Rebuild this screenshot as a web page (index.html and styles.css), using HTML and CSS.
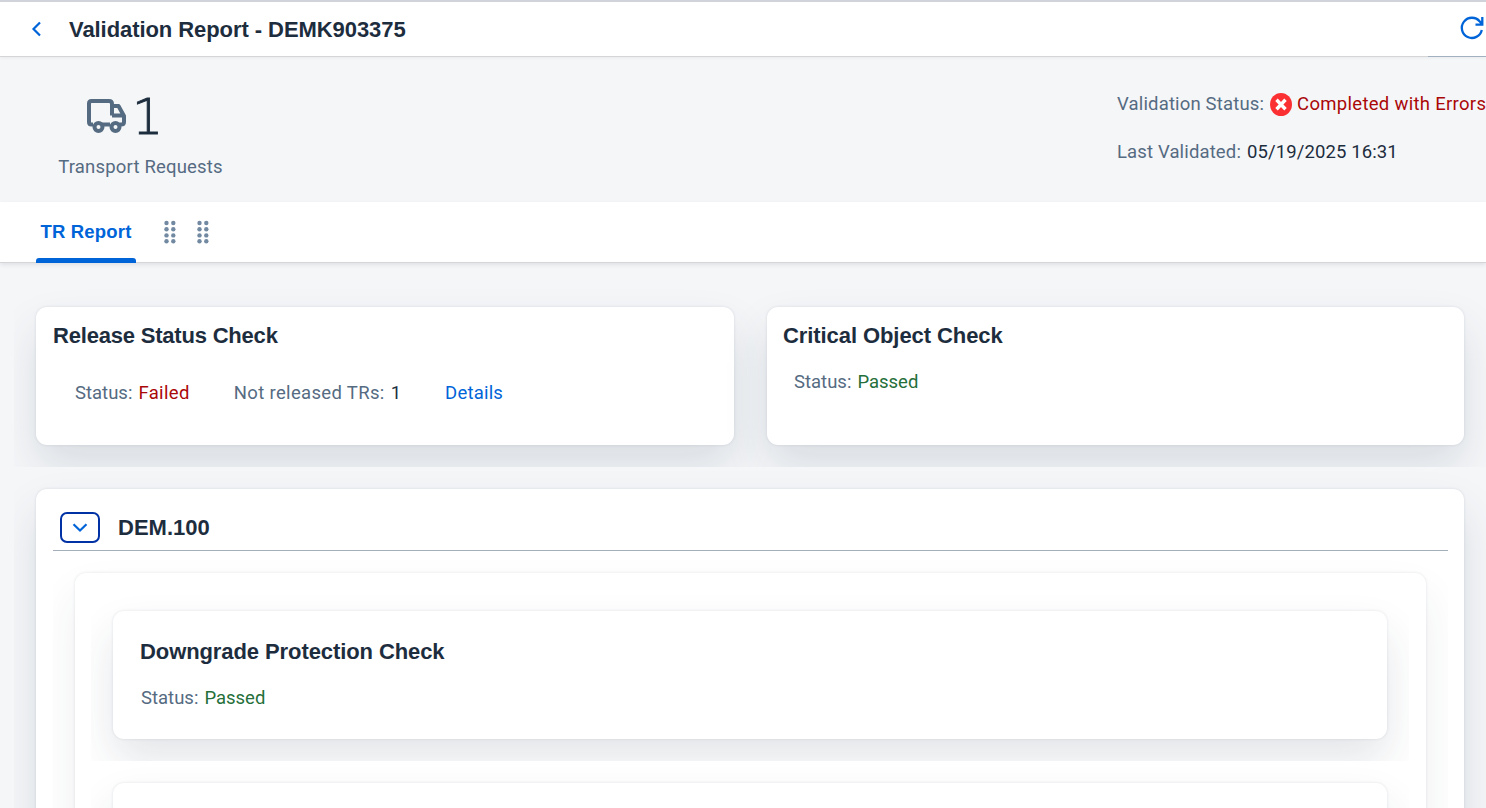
FILE: index.html
```html
<!DOCTYPE html>
<html lang="en">
<head>
<meta charset="utf-8">
<title>Validation Report</title>
<link rel="stylesheet" href="styles.css">
</head>
<body>
<div class="page">
  <header class="titlebar">
    <svg class="back" width="12" height="18" viewBox="0 0 12 18"><path d="M11 2.500 4.500 9l6.500 6.500"/></svg>
    <h1 class="title">Validation Report - DEMK903375</h1>
    <div class="toolbar"><svg class="refresh" width="26" height="26" viewBox="0 0 26 26"><path d="M22.800 15A10.1 10.1 0 1 1 20.800 6.500L23 9M16.500 9.700h6.800V2"/></svg></div>
  </header>
  <section class="summary">
    <div class="kpi">
      <div class="kpi-value">
        <svg class="truck" width="42" height="38" viewBox="0 0 42 38"><path d="M8 28.500H6.500Q4 28.500 4 26V7.500Q4 5 6.500 5H24q3 0 3 3v11.500M17 28.500h8M27 10h6.500l5.500 10v6q0 2.500-3 2.500h-1.500M27 19.500h11"/><circle cx="13.500" cy="31" r="4"/><circle cx="30.500" cy="31" r="4"/></svg>
        <span class="kpi-number">1</span>
      </div>
      <div class="kpi-label"><span class="t-transport">Transport Requests</span></div>
    </div>
    <div class="facts">
      <div class="fact"><span class="label t-vstatus">Validation Status:</span><svg class="error-icon" width="22" height="24" viewBox="0 0 22 24"><ellipse cx="11" cy="12.500" rx="11" ry="11.500"/><path d="m6.500 7.800 9 9.400m0-9.400-9 9.400"/></svg><span class="error t-completed">Completed with Errors</span></div>
      <div class="fact"><span class="label t-last">Last Validated:</span><span class="value t-date">05/19/2025 16:31</span></div>
    </div>
  </section>
  <nav class="tabs">
    <div class="tab"><span>TR Report</span></div>
    <svg class="grip" width="12" height="24" viewBox="0 0 12 24"><g><circle cx="2.500" cy="3" r="2.200"/><circle cx="9.300" cy="3" r="2.200"/><circle cx="2.500" cy="9.200" r="2.200"/><circle cx="9.300" cy="9.200" r="2.200"/><circle cx="2.500" cy="15.400" r="2.200"/><circle cx="9.300" cy="15.400" r="2.200"/><circle cx="2.500" cy="21.300" r="2.200"/><circle cx="9.300" cy="21.300" r="2.200"/></g></svg>
    <svg class="grip" width="12" height="24" viewBox="0 0 12 24"><g><circle cx="2.500" cy="3" r="2.200"/><circle cx="9.300" cy="3" r="2.200"/><circle cx="2.500" cy="9.200" r="2.200"/><circle cx="9.300" cy="9.200" r="2.200"/><circle cx="2.500" cy="15.400" r="2.200"/><circle cx="9.300" cy="15.400" r="2.200"/><circle cx="2.500" cy="21.300" r="2.200"/><circle cx="9.300" cy="21.300" r="2.200"/></g></svg>
  </nav>
  <main class="content">
    <div class="checks">
      <article class="card">
        <h2 class="heading t-release">Release Status Check</h2>
        <div class="status-row release-row">
          <span class="pair"><span class="label t-status">Status:</span><span class="error t-failed">Failed</span></span>
          <span class="pair"><span class="label t-notrel">Not released TRs:</span><span class="value">1</span></span>
          <a class="link">Details</a>
        </div>
      </article>
      <article class="card">
        <h2 class="heading t-critical">Critical Object Check</h2>
        <div class="status-row critical-row"><span class="pair"><span class="label t-status">Status:</span><span class="success">Passed</span></span></div>
      </article>
    </div>
    <div class="system-clip">
      <section class="card system">
        <div class="system-head">
          <div class="expander"><svg width="16" height="12" viewBox="0 0 16 12"><path d="m1.500 2.200 6.500 6.300 6.500-6.300"/></svg></div>
          <h2 class="heading t-dem">DEM.100</h2>
        </div>
        <div class="group-clip">
          <div class="card group">
            <div class="check-clip">
              <article class="card check">
                <h2 class="heading t-down">Downgrade Protection Check</h2>
                <div class="status-row"><span class="pair"><span class="label t-status">Status:</span><span class="success">Passed</span></span></div>
              </article>
            </div>
            <div class="check-clip"><article class="card check"></article></div>
          </div>
        </div>
      </section>
    </div>
  </main>
</div>
</body>
</html>
```
FILE: styles.css
```css
* { box-sizing: border-box; }
body { margin: 0; font: 18.5px/24px Roboto, "Liberation Sans", sans-serif; color: #1d2d3e; }
h1, h2 { margin: 0; font: 700 22px/28px "Liberation Sans", Arial, sans-serif; white-space: nowrap; }
svg { display: block; flex: none; fill: none; }
span, a { white-space: nowrap; }
.page { width: 1486px; height: 808px; overflow: hidden; display: flex; flex-direction: column; background: #f5f6f8; }

.titlebar { height: 57px; flex: none; display: flex; align-items: flex-start; background: #fff; border-top: 2px solid #d0d4da; border-bottom: 1px solid #d5d5d6; padding-left: 29px; box-shadow: 0 1px 3px rgba(34, 53, 72, .06); position: relative; }
.back { margin-top: 18px; stroke: #0064d9; stroke-width: 2.200; }
.title { margin: 14px 0 0 28px; letter-spacing: -.07px; }
.toolbar { margin: 0 0 -1px auto; width: 58px; height: 55px; padding: 13px 0 0 31px; border-bottom: 1px solid #a2b1c0; overflow: hidden; }
.refresh { stroke: #0064d9; stroke-width: 2.300; }

.summary { height: 145px; flex: none; display: flex; justify-content: space-between; }
.kpi { width: 281px; }
.kpi-value { display: flex; align-items: center; height: 48px; margin: 35px 0 0 85px; gap: 5px; }
.truck { stroke: #556b82; stroke-width: 4; stroke-linejoin: round; margin-top: -2px; }
.kpi-number { font: 200 49px/48px "DejaVu Sans", sans-serif; width: 30px; margin-top: 3px; -webkit-text-stroke: .9px #1d2d3e; }
.kpi-label { display: flex; justify-content: center; margin-top: 15px; color: #556b82; }
.facts { display: flex; flex-direction: column; gap: 24px; padding-top: 35px; width: 369px; }
.fact { display: flex; align-items: center; height: 24px; }
.error-icon { fill: #fb3033; margin: 0 5px 0 6px; }
.error-icon path { stroke: #fff; stroke-width: 3.400; }
.label { color: #556b82; }
.value { color: #1d2d3e; margin-left: 6px; }
.error { color: #aa0808; }
.success { color: #256f3a; }
.link { color: #0064d9; letter-spacing: .2px; }
.t-transport { letter-spacing: .18px; }
.t-vstatus { letter-spacing: .16px; }
.t-completed { letter-spacing: .3px; }
.t-last { letter-spacing: .14px; }
.t-date { letter-spacing: .1px; }
.t-failed { letter-spacing: .35px; }
.t-notrel { letter-spacing: .34px; }
.t-release { letter-spacing: -.2px; }
.t-critical { letter-spacing: -.08px; margin-left: -1px; }
.t-down { letter-spacing: -.09px; margin-left: -1px; }

.tabs { height: 61px; flex: none; display: flex; background: #fff; border-bottom: 1px solid #d5d5d6; padding-left: 36px; box-shadow: 0 2px 4px rgba(34, 53, 72, .1); position: relative; }
.tab { width: 100px; height: 61px; padding-top: 18px; text-align: center; color: #0064d9; font-family: "Liberation Sans", Arial, sans-serif; font-weight: 700; letter-spacing: .2px; margin-right: 28px; display: flex; flex-direction: column; justify-content: space-between; }
.tab::after { content: ""; height: 5px; border-radius: 3px 3px 0 0; background: #0064d9; }
.grip { margin: 18px 21px 0 0; fill: #7289a2; }

.content { flex: 1; min-height: 0; padding: 22px 0 0 14px; }
.card { background: #fff; border-radius: 11px; box-shadow: 0 0 3px rgba(34, 53, 72, .13), 0 22px 44px rgba(34, 63, 82, .13); }
.checks { display: grid; grid-template-columns: 698px 697px; gap: 33px; padding: 22px; height: 182px; overflow: hidden; }
.checks .card { padding: 15px 17px; height: 138px; }
.status-row { display: flex; }
.pair { display: flex; }
.pair .error, .pair .success { margin-left: 6px; }
.release-row { margin: 31px 0 0 22px; gap: 44px; }
.critical-row { margin: 20px 0 0 10px; }
.system-clip { overflow: hidden; padding: 22px 22px 0; height: 341px; }
.system { height: 600px; width: 1428px; padding: 0 16px 0 17px; }
.system-head { height: 62px; display: flex; align-items: center; border-bottom: 1px solid #a5afbb; padding: 16px 0 0 7px; }
.expander { width: 40px; height: 31px; border: 2px solid #0032a5; border-radius: 7px; display: grid; place-items: center; margin-right: 18px; }
.expander svg { stroke: #0064d9; stroke-width: 2.200; }
.group-clip { padding: 22px; overflow: hidden; height: 500px; }
.group { height: 480px; padding: 16px 17px 16px 16px; box-shadow: 0 0 3px rgba(34, 53, 72, .13), 0 22px 44px rgba(34, 53, 72, .08); }
.check-clip { padding: 22px; height: 172px; overflow: hidden; }
.check { height: 128px; padding: 27px 28px; box-shadow: 0 0 3px rgba(34, 53, 72, .13), 0 22px 44px rgba(34, 53, 72, .12); }
.check .status-row { margin-top: 20px; }
```
